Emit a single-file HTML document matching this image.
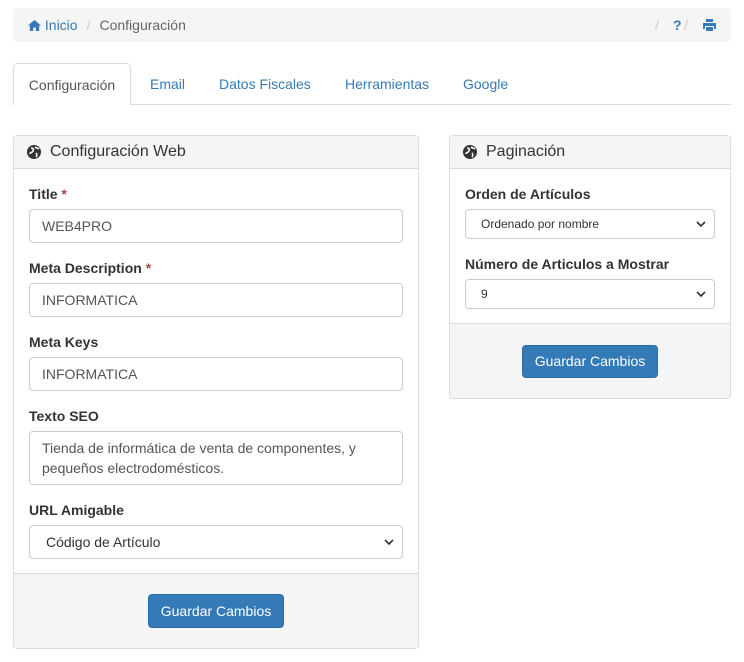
<!DOCTYPE html>
<html><head><meta charset="utf-8"><style>
*{box-sizing:border-box;margin:0;padding:0}
body{width:744px;height:662px;background:#fff;font-family:"Liberation Sans",Arial,sans-serif;font-size:14px;color:#333;position:relative;overflow:hidden}
.a{position:absolute}
.bc{left:13px;top:8px;width:718px;height:34px;background:#f5f5f5;border-radius:4px}
.link{color:#337ab7}
.tabline{left:13px;top:104px;width:718px;height:1px;background:#ddd}
.tab{top:63px;height:42px;line-height:42px;color:#337ab7;font-size:14px}
.act{left:13px;width:118px;border:1px solid #ddd;border-bottom:none;background:#fff;border-radius:4px 4px 0 0;color:#555;text-align:center}
.panel{border:1px solid #ddd;border-radius:4px;background:#fff;overflow:hidden}
.ph{position:absolute;left:0;top:0;right:0;height:33px;background:#f5f5f5;border-bottom:1px solid #ddd;font-size:16px;line-height:32px;padding-left:36px}
.ph svg{position:absolute;left:13px;top:9px}
.pf{position:absolute;left:0;right:0;bottom:0;background:#f5f5f5;border-top:1px solid #ddd}
.lbl{font-weight:bold;font-size:14px}
.req{color:#a94442}
.in{border:1px solid #ccc;border-radius:4px;background:#fff;padding-left:12px;font-size:14px;color:#555;display:flex;align-items:center}
.sel svg{position:absolute;right:8px;top:50%;margin-top:-3px}
.btn{background:#337ab7;border:1px solid #2e6da4;border-radius:4px;color:#fff;text-align:center;font-size:14px}
</style></head><body>
<div class="a bc"></div>
<div class="a" style="left:28px;top:17px" ><span class="link"><svg width="13" height="11" viewBox="0 0 13 11" style="vertical-align:-1px"><path d="M6.5 0L0 5.5h1.8V11h3.4V7.5h2.6V11h3.4V5.5H13z" fill="#337ab7"/></svg> Inicio</span><span style="color:#ccc;padding:0 9px">/</span><span style="color:#666">Configuración</span></div>
<div class="a" style="left:655px;top:17px;color:#ccc">/</div>
<div class="a" style="left:673px;top:17px;color:#337ab7;font-weight:bold">?</div>
<div class="a" style="left:684px;top:17px;color:#ccc">/</div>
<svg class="a" style="left:703px;top:19px" width="13" height="12" viewBox="0 0 13 12"><path d="M3 0h7v3H3z M0 4h13v6h-2V7H2v3H0z M3 8h7v4H3z" fill="#337ab7"/></svg>
<div class="a tabline"></div>
<div class="a tab act">Configuración</div>
<div class="a tab" style="left:150px">Email</div>
<div class="a tab" style="left:219px">Datos Fiscales</div>
<div class="a tab" style="left:345px">Herramientas</div>
<div class="a tab" style="left:463px">Google</div>

<div class="a panel" style="left:13px;top:135px;width:406px;height:514px">
<div class="ph"><svg width="14" height="14" viewBox="0 0 14 14"><circle cx="7" cy="7" r="7" fill="#333"/><path d="M4 3c2 0 3 1 2 3s-3 1-3 3M9 8c1 1 1 3 0 4M8 2c1 1 3 1 4 2" stroke="#fff" stroke-width="1.6" fill="none"/></svg>Configuración Web</div>
<div class="pf" style="height:75px"></div>
</div>
<div class="a lbl" style="left:29px;top:186px">Title <span class="req">*</span></div>
<div class="a in" style="left:29px;top:209px;width:374px;height:34px">WEB4PRO</div>
<div class="a lbl" style="left:29px;top:260px">Meta Description <span class="req">*</span></div>
<div class="a in" style="left:29px;top:283px;width:374px;height:34px">INFORMATICA</div>
<div class="a lbl" style="left:29px;top:334px">Meta Keys</div>
<div class="a in" style="left:29px;top:357px;width:374px;height:34px">INFORMATICA</div>
<div class="a lbl" style="left:29px;top:408px">Texto SEO</div>
<div class="a in" style="left:29px;top:431px;width:374px;height:54px;align-items:flex-start;padding-top:6px;line-height:20px">Tienda de informática de venta de componentes, y pequeños electrodomésticos.</div>
<div class="a lbl" style="left:29px;top:502px">URL Amigable</div>
<div class="a in sel" style="left:29px;top:525px;width:374px;height:34px;padding-left:16px;color:#333">Código de Artículo<svg width="10" height="7" viewBox="0 0 10 7"><path d="M1 1l4 4 4-4" stroke="#333" stroke-width="1.6" fill="none"/></svg></div>
<div class="a btn" style="left:148px;top:594px;width:136px;height:34px;line-height:32px">Guardar Cambios</div>

<div class="a panel" style="left:449px;top:135px;width:282px;height:264px">
<div class="ph"><svg width="14" height="14" viewBox="0 0 14 14"><circle cx="7" cy="7" r="7" fill="#333"/><path d="M4 3c2 0 3 1 2 3s-3 1-3 3M9 8c1 1 1 3 0 4M8 2c1 1 3 1 4 2" stroke="#fff" stroke-width="1.6" fill="none"/></svg>Paginación</div>
<div class="pf" style="height:75px"></div>
</div>
<div class="a lbl" style="left:465px;top:186px">Orden de Artículos</div>
<div class="a in sel" style="left:465px;top:209px;width:250px;height:30px;font-size:12px;padding-left:15px;color:#333">Ordenado por nombre<svg width="10" height="7" viewBox="0 0 10 7"><path d="M1 1l4 4 4-4" stroke="#333" stroke-width="1.6" fill="none"/></svg></div>
<div class="a lbl" style="left:465px;top:256px">Número de Articulos a Mostrar</div>
<div class="a in sel" style="left:465px;top:279px;width:250px;height:30px;font-size:12px;padding-left:15px;color:#333">9<svg width="10" height="7" viewBox="0 0 10 7"><path d="M1 1l4 4 4-4" stroke="#333" stroke-width="1.6" fill="none"/></svg></div>
<div class="a btn" style="left:522px;top:345px;width:136px;height:33px;line-height:31px">Guardar Cambios</div>
</body></html>
